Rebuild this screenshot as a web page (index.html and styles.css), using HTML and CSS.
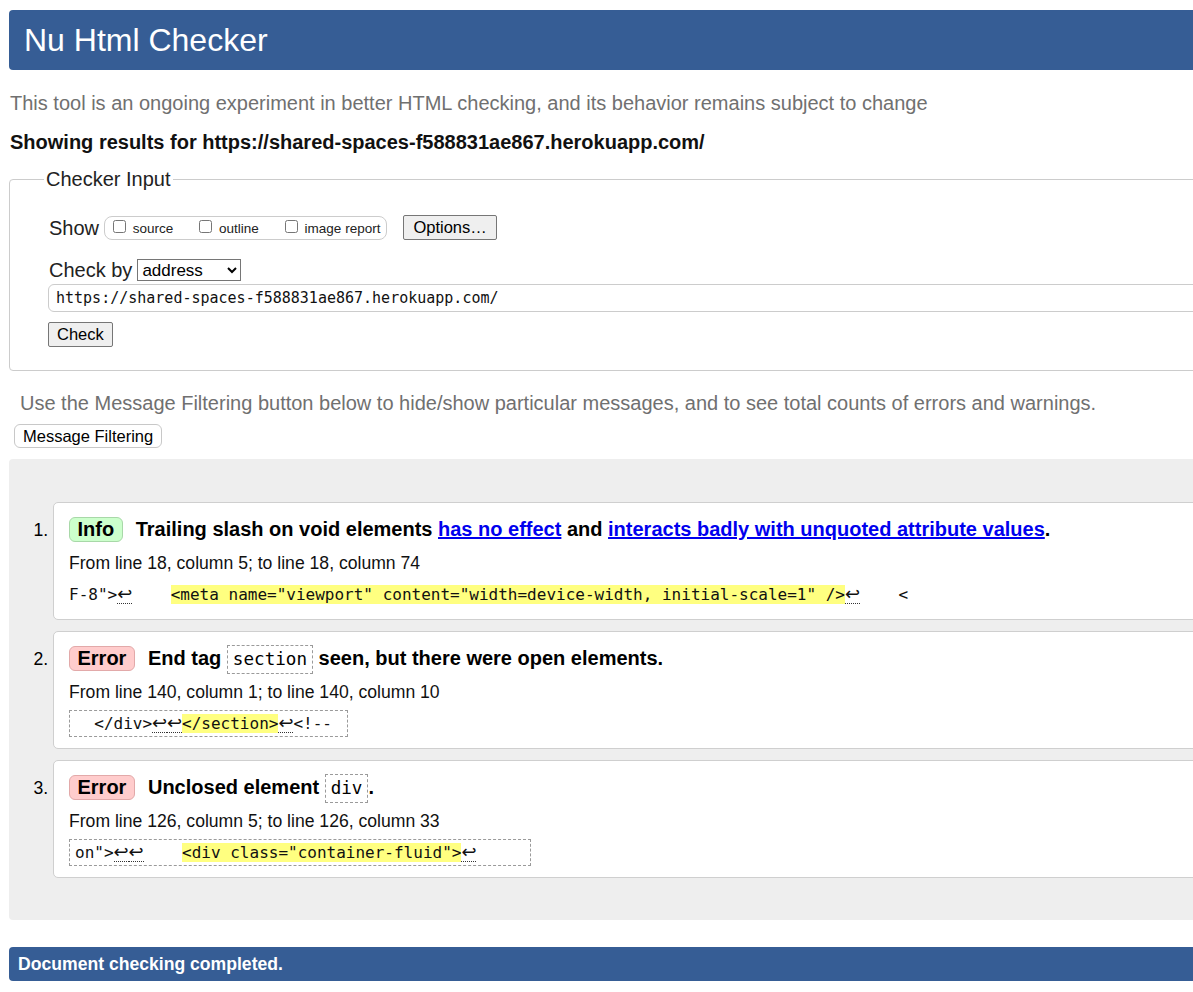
FILE: index.html
```html
<!DOCTYPE html>
<html lang="en">
<head>
<meta charset="utf-8">
<title>Nu Html Checker</title>
<link rel="stylesheet" href="styles.css">
</head>
<body>
<div class="page">
  <h1 class="masthead">Nu Html Checker</h1>
  <p class="about">This tool is an ongoing experiment in better HTML checking, and its behavior remains subject to change</p>
  <p class="showing">Showing results for https://shared-spaces-f588831ae867.herokuapp.com/</p>

  <fieldset class="checker">
    <legend>Checker Input</legend>
    <div class="show-row">
      <span class="lbl">Show</span>
      <span class="show-group"><label><input type="checkbox"> source</label><label><input type="checkbox"> outline</label><label><input type="checkbox"> image report</label></span>
      <button class="btn options" type="button">Options…</button>
    </div>
    <div class="by-row">
      <span class="lbl">Check by</span>
      <select class="by-select"><option>address</option></select>
    </div>
    <input class="url" type="text" value="https://shared-spaces-f588831ae867.herokuapp.com/">
    <button class="btn check" type="button">Check</button>
  </fieldset>

  <p class="filter-note">Use the Message Filtering button below to hide/show particular messages, and to see total counts of errors and warnings.</p>
  <button class="btn filter" type="button">Message Filtering</button>

  <div class="results">
    <ol class="msgs">
      <li class="msg">
        <p class="msg-title"><span class="badge info">Info</span> Trailing slash on void elements <a href="#">has no effect</a> and <a href="#">interacts badly with unquoted attribute values</a>.</p>
        <p class="loc">From line 18, column 5; to line 18, column 74</p>
        <p class="extract-row"><code class="extract plain">F-8"&gt;<span class="lf">↩</span>    <mark>&lt;meta name="viewport" content="width=device-width, initial-scale=1" /&gt;</mark><span class="lf">↩</span>    &lt;</code></p>
      </li>
      <li class="msg">
        <p class="msg-title"><span class="badge error">Error</span> End tag <code class="kw">section</code> seen, but there were open elements.</p>
        <p class="loc">From line 140, column 1; to line 140, column 10</p>
        <p class="extract-row"><code class="extract">  &lt;/div&gt;<span class="lf">↩</span><span class="lf">↩</span><mark>&lt;/section&gt;</mark><span class="lf">↩</span>&lt;!-- </code></p>
      </li>
      <li class="msg">
        <p class="msg-title"><span class="badge error">Error</span> Unclosed element <code class="kw">div</code>.</p>
        <p class="loc">From line 126, column 5; to line 126, column 33</p>
        <p class="extract-row"><code class="extract">on"&gt;<span class="lf">↩</span><span class="lf">↩</span>    <mark>&lt;div class="container-fluid"&gt;</mark><span class="lf">↩</span>     </code></p>
      </li>
    </ol>
  </div>

  <p class="done">Document checking completed.</p>
</div>
</body>
</html>
```
FILE: styles.css
```css
html, body {
  margin: 0;
  padding: 0;
  background: #fff;
}
body {
  overflow: hidden;
  font-family: "Liberation Sans", Arial, sans-serif;
  color: #000;
}
.page {
  width: 1240px;
  padding: 10px 0 0 9px;
}
.masthead {
  margin: 0;
  height: 60px;
  line-height: 60px;
  padding-left: 15px;
  background: #365d95;
  color: #fff;
  font-size: 32px;
  font-weight: normal;
  border-radius: 4px;
}
.about {
  margin: 21px 0 0 1px;
  font-size: 20px;
  line-height: 24px;
  color: #707070;
}
.showing {
  margin: 15px 0 0 1px;
  font-size: 20px;
  line-height: 24px;
  font-weight: bold;
  color: #111;
}
.checker {
  margin: 13px 0 0 0;
  padding: 24px 0 23px 38px;
  border: 1px solid #cccccc;
  border-radius: 4px;
  min-width: 0;
}
.checker legend {
  font-size: 20px;
  line-height: 24px;
  padding: 0 2px;
  margin-left: -4px;
  color: #222;
}
.show-row {
  display: flex;
  align-items: center;
  height: 25px;
  margin-left: 1px;
}
.lbl {
  font-size: 20px;
  line-height: 24px;
  color: #222;
}
.show-group {
  display: block;
  margin-left: 5px;
  height: 22px;
  line-height: 22px;
  font-size: 13.5px;
  padding: 0 6px 0 4px;
  border: 1px solid #cccccc;
  border-radius: 8px;
  white-space: nowrap;
  color: #222;
}
.show-group label {
  margin-right: 22px;
}
.show-group label:last-child {
  margin-right: 0;
}
.show-group input {
  margin: 3px 3px 3px 4px;
  width: 13px;
  height: 13px;
}
.btn {
  font-family: "Liberation Sans", Arial, sans-serif;
  font-size: 16.5px;
  height: 25px;
  padding: 0 8px;
  border: 1px solid #767676;
  border-radius: 2px;
  background: #efefef;
  color: #000;
}
.options {
  margin-left: 16px;
  padding: 0 9px;
}
.by-row {
  display: flex;
  align-items: center;
  height: 22px;
  margin-top: 19px;
  margin-left: 1px;
}
.by-select {
  margin-left: 5px;
  width: 104px;
  height: 22px;
  font-family: "Liberation Sans", Arial, sans-serif;
  font-size: 17px;
  border: 1px solid #767676;
  background: #fff;
  color: #000;
}
.url {
  display: block;
  box-sizing: border-box;
  width: 100%;
  height: 28px;
  margin: 3px 0 0 0;
  padding: 0 7px;
  border: 1px solid #cccccc;
  border-radius: 6px;
  font-family: "DejaVu Sans Mono", monospace;
  font-size: 15px;
  color: #111;
}
.check {
  display: block;
  margin-top: 10px;
}
.filter-note {
  margin: 20px 0 0 11px;
  font-size: 20px;
  line-height: 24px;
  color: #707070;
}
.filter {
  display: block;
  margin: 9px 0 0 5px;
  height: 24px;
  background: #fff;
  border: 1px solid #c8c8c8;
  border-radius: 6px;
}
.results {
  margin-top: 11px;
  padding: 43px 0 42px 44px;
  background: #eeeeee;
  border-radius: 4px;
}
.msgs {
  margin: 0;
  padding: 0;
  font-size: 17.6px;
}
.msg {
  background: #fff;
  border: 1px solid #cfcfcf;
  border-radius: 5px;
  padding: 14px 0 11px 15px;
  margin-bottom: 11px;
}
.msg:last-child {
  margin-bottom: 0;
}
.msg p {
  margin: 0;
}
.msg-title {
  font-size: 20px;
  font-weight: bold;
  line-height: 25px;
  white-space: nowrap;
}
.msg-title a {
  color: #0000ee;
}
.badge {
  display: inline-block;
  vertical-align: top;
  height: 23px;
  line-height: 23px;
  padding: 0 8px 0 7.5px;
  border-radius: 6px;
  margin-right: 7px;
}
.badge.info {
  background: #ccffcc;
  border: 1px solid #a8d8a8;
}
.badge.error {
  background: #ffcccc;
  border: 1px solid #e2a9a9;
}
.kw {
  display: inline-block;
  vertical-align: top;
  margin: -1px 0 -3px 0;
  padding: 0 5px;
  line-height: 27px;
  border: 1px dashed #9a9a9a;
  font-family: "DejaVu Sans Mono", monospace;
  font-size: 17.6px;
  font-weight: normal;
}
.loc {
  margin-top: 11px !important;
  line-height: 20px;
  color: #111;
}
.extract-row {
  margin-top: 8px !important;
  line-height: 27px;
  height: 27px;
  white-space: nowrap;
}
.extract {
  display: inline-block;
  vertical-align: top;
  white-space: pre;
  height: 25px;
  line-height: 25px;
  padding: 0 5px;
  border: 1px dashed #9a9a9a;
  font-family: "DejaVu Sans Mono", monospace;
  font-size: 16px;
  color: #111;
}
.extract.plain {
  padding: 0;
  border-color: transparent;
  border-left: 0;
}
.extract mark {
  background: #ffff80;
  color: inherit;
}
.lf {
  display: inline-block;
  width: 15px;
  line-height: 18px;
  font-family: "DejaVu Sans", sans-serif;
  font-size: 18px;
  border-bottom: 1px dotted #333;
}
.done {
  margin: 27px 0 0 0;
  height: 34px;
  line-height: 34px;
  padding-left: 9px;
  background: #365d95;
  color: #fff;
  font-weight: bold;
  font-size: 17.6px;
  border-radius: 4px;
}
```
